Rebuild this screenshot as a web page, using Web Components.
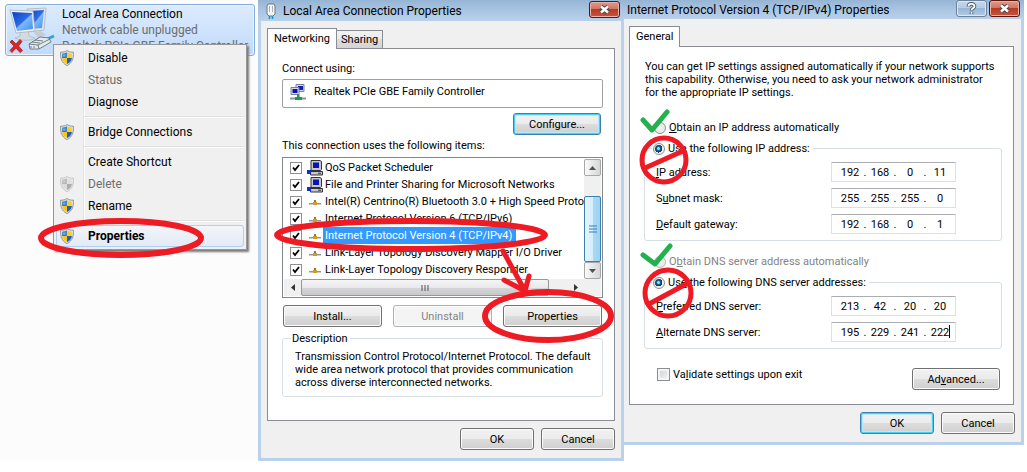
<!DOCTYPE html>
<html lang="en">
<head>
<meta charset="utf-8">
<title>Network connection settings</title>
<style>
  body { margin: 0; background: #fff; color: #000; }
  setup-guide { --ui: Roboto, "Open Sans", sans-serif; --classic: Roboto, "Liberation Sans", sans-serif; --tahoma: Roboto, "Noto Sans", sans-serif; }
</style>
</head>
<body>
<setup-guide>
  <connection-panel slot="menu"></connection-panel>
  <adapter-dialog slot="adapter"></adapter-dialog>
  <ip-dialog slot="ip"></ip-dialog>
</setup-guide>

<script>
const define = (name, html, setup) => {
  const tpl = document.createElement('template');
  tpl.innerHTML = html;
  customElements.define(name, class extends HTMLElement {
    constructor() {
      super();
      this.attachShadow({ mode: 'open' }).append(tpl.content.cloneNode(true));
    }
    connectedCallback() { if (setup) setup(this, this.shadowRoot); }
  });
};

define('setup-guide', `
<style>
  :host { display: grid; grid-template-columns: minmax(0, 258fr) minmax(0, 366fr) minmax(0, 400fr); align-items: start; padding-right: 3px; font: 12px/16px var(--ui); }
</style>
<slot name="menu"></slot><slot name="adapter"></slot><slot name="ip"></slot>`);

/* ---------- shared controls ---------- */

define('uac-shield', `
<style>
  :host { display: block; width: 14px; height: 16px; }
  :host([off]) { filter: grayscale(1) opacity(.45); }
  svg { display: block; }
</style>
<svg width="14" height="16" viewBox="0 0 14 16">
  <path d="M7 .5C5.400 1.800 3 2.300.6 2.200.4 7.500 1 12.600 7 15.600 13 12.600 13.600 7.500 13.400 2.200 11 2.300 8.600 1.800 7 .5z" fill="#e4e4e4" stroke="#8b8b8b" stroke-width=".9"/>
  <path d="M6.900 2.200C5.600 3.100 4 3.600 2.200 3.600L2.100 8H6.900z" fill="#2b7cd3"/>
  <path d="M7 2.200C8.400 3.100 10 3.600 11.800 3.600L11.900 8H7z" fill="#fdd017"/>
  <path d="M2.100 8H7V14C4 12.600 2.400 11 2.100 8z" fill="#fdc50f"/>
  <path d="M11.900 8H7V14C10 12.600 11.600 11 11.900 8z" fill="#1f5fb8"/>
  <path d="M3 4.500h2.500v2H3z" fill="#9fd0f5" opacity=".6"/>
</svg>`);

define('push-button', `
<style>
  :host { display: block; width: 74px; }
  button { display: block; box-sizing: border-box; width: 100%; height: 22px; padding: 0; font: inherit; color: #000;
    border: 1px solid #707070; border-radius: 3px; box-shadow: inset 0 0 0 1px #fcfcfc;
    background: linear-gradient(#f2f2f2, #ebebeb 50%, #dddddd 50%, #cfcfcf); }
  :host([primary]) button { border-color: #3c7fb1; box-shadow: inset 0 0 0 1px #48d0f5, inset 0 0 0 2px #b5eafb; }
  button:disabled { color: #838383; border-color: #adb2b5; background: #f4f4f4; }
</style>
<button type="button"><slot></slot></button>`, (el, root) => {
  root.querySelector('button').disabled = el.hasAttribute('disabled');
});

define('caption-button', `
<style>
  :host { display: block; width: 31px; }
  button { display: grid; place-items: center; box-sizing: border-box; width: 100%; height: 17px; padding: 0;
    border: 1px solid #5c1610; border-radius: 3px; box-shadow: inset 0 0 0 1px #e9b2a8;
    background: linear-gradient(#dd9a8c, #cf7464 48%, #b93a24 50%, #c4563f); }
  :host([kind=help]) button { border-color: #6d8199; box-shadow: inset 0 0 0 1px #dce9f6; background: linear-gradient(#c3d7ec, #b3cbe5 48%, #98b6d6 50%, #b2cce6); }
  svg { display: block; }
  .help, :host([kind=help]) .close { display: none; }
  :host([kind=help]) .help { display: block; }
</style>
<button type="button">
  <svg class="close" width="13" height="11" viewBox="0 0 13 11"><path d="M3 2.500l7 6M10 2.500l-7 6" stroke="#4a4a55" stroke-width="4.400"/><path d="M3 2.500l7 6M10 2.500l-7 6" stroke="#fff" stroke-width="2.400"/></svg>
  <svg class="help" width="11" height="13" viewBox="0 0 11 13"><g fill="none"><path d="M2.500 4.500C2.500 1 8.500 1 8.500 4.200 8.500 6.200 5.500 6.300 5.500 8.500M5.500 9.700v2.300" stroke="#4d5766" stroke-width="3.600"/><path d="M2.500 4.300C2.500 1.200 8.500 1.200 8.500 4.200 8.500 6.200 5.500 6.300 5.500 8.300M5.500 9.900v1.800" stroke="#fff" stroke-width="1.800"/></g></svg>
</button>`, (el, root) => {
  root.querySelector('button').setAttribute('aria-label', el.getAttribute('kind'));
});

define('window-frame', `
<style>
  :host { display: block; position: relative; border: solid #b9d1ea; border-width: 0 3px 3px; background: #f0f0f0; }
  header { display: flex; align-items: center; box-sizing: border-box; height: var(--bar, 21px); margin: 0 -3px; padding: 0 4px 0 var(--bar-pad, 3px);
    background: linear-gradient(#96b4d5, #a9c5e2 50%, #b9d1ea); }
  h1 { flex: 1; margin: 0; font: 12px/16px var(--ui); white-space: nowrap; }
  .tools { display: flex; gap: 2px; align-self: flex-start; padding-top: var(--tool-top, 0px); }
  .body { padding: 7px 6px 8px; }
  footer { display: flex; justify-content: flex-end; gap: 7px; padding-top: 7px; }
</style>
<header><slot name="icon"></slot><h1><slot name="title"></slot></h1><div class="tools"><slot name="tools"></slot></div></header>
<div class="body"><slot></slot><footer><slot name="footer"></slot></footer></div>`);

define('tab-sheet', `
<style>
  :host { display: block; }
  .tabs { display: flex; align-items: flex-end; }
  .sheet { box-sizing: border-box; border: 1px solid #898c95; background: #fff; padding: var(--sheet-pad); }
</style>
<div class="tabs" role="tablist"><slot name="tab"></slot></div>
<div class="sheet"><slot></slot></div>`);

define('tab-button', `
<style>
  :host { display: block; }
  button { display: block; box-sizing: border-box; height: 18px; padding: 0 4px; font: inherit; line-height: 17px; color: #000;
    border: 1px solid #898c95; border-bottom: 0; border-left: 0; background: linear-gradient(#f2f2f2, #ebebeb 50%, #dddddd 50%, #d4d4d4); }
  :host([active]) { position: relative; margin-bottom: -1px; }
  :host([active]) button { height: 21px; padding: 0 6px; line-height: 18px; border-left: 1px solid #898c95; background: #fff; }
</style>
<button type="button" role="tab"><slot></slot></button>`, (el, root) => {
  root.querySelector('button').setAttribute('aria-selected', el.hasAttribute('active'));
});

/* ---------- connection tile with its context menu ---------- */

define('menu-entry', `
<style>
  :host { display: block; }
  button { display: grid; grid-template-columns: 28px 1fr; align-items: center; box-sizing: border-box; width: 100%; height: 22px; padding: 0 0 0 3px;
    border: 1px solid transparent; border-radius: 3px; background: none; font: inherit; color: #000; text-align: left; }
  button:disabled { color: #6d6d6d; }
  :host([hot]) button { border-color: #aecff7; background: linear-gradient(#f2f5fa, #e3ebf5); font-weight: bold; }
  .label { grid-column: 2; white-space: nowrap; }
</style>
<button type="button" role="menuitem"><slot name="icon"></slot><span class="label"><slot></slot></span></button>`, (el, root) => {
  root.querySelector('button').disabled = el.hasAttribute('disabled');
});

define('connection-panel', `
<style>
  :host { display: block; position: relative; padding: 4px 3px 0 5px; background: #fcfcfc; min-height: 460px; box-sizing: border-box; }
  .tile { display: grid; grid-template-columns: 48px minmax(0, 1fr); gap: 6px; box-sizing: border-box; height: 52px; padding: 1px 4px 0 2px; overflow: hidden;
    border: 1px solid #84acdd; border-radius: 3px; box-shadow: inset 0 0 0 1px #eaf3fe; background: linear-gradient(#dcebfc, #c1dbfc); }
  .tile p { margin: 0; white-space: nowrap; overflow: hidden; text-overflow: ellipsis; color: #6d6d6d; }
  .tile p.name { color: #000; }
  .tile svg { display: block; }
  .menu { position: absolute; left: 53px; top: 44px; box-sizing: border-box; width: 194px; padding: 2px; border: 1px solid #979797;
    background: linear-gradient(90deg, #f0f0f0 29px, #e2e3e3 29px, #e2e3e3 30px, #fff 30px, #fff 31px, #f0f0f0 31px) ; box-shadow: 2px 2px 2px #777; }
  hr { margin: 3px 0 3px 28px; border: 0; border-top: 1px solid #e0e0e0; border-bottom: 1px solid #fff; }
  .ring { position: absolute; left: 38px; top: 217px; pointer-events: none; }
</style>
<div class="tile">
  <svg width="48" height="48" viewBox="0 0 48 48">
    <defs><linearGradient id="scr" x1="0" y1="0" x2="1" y2="1"><stop offset="0" stop-color="#0c3fc4"/><stop offset=".5" stop-color="#2b6ce6"/><stop offset=".55" stop-color="#7db8f8"/><stop offset="1" stop-color="#3f8cf0"/></linearGradient></defs>
    <path d="M26 26l7-1 5 4-8 3z" fill="#c5ccd3"/>
    <path d="M19 3l19-1-2 22-16 2z" fill="#dfe6ea" stroke="#a9b4bd" stroke-width=".8"/><path d="M21 5l15-1-2 18-12 1z" fill="url(#scr)"/>
    <path d="M12 26l8-1 1 5 6 2c-3 3-14 3-20 0l5-2z" fill="#d5dadd" stroke="#a8afb5" stroke-width=".6"/>
    <path d="M2 4l23 1 2 20-19 2z" fill="#eef1f2" stroke="#a9b4bd" stroke-width=".8"/><path d="M4 6l20 1 1 16-16 2z" fill="url(#scr)"/>
    <path d="M2 36l2-2 4 4 4-4.500 2 2-3.500 4.500 4 4.500-2.500 2-4-4.500-4 4.500-2-2 4-4.500z" fill="#e02525" stroke="#a60f12" stroke-width=".7"/>
    <path d="M37 34l9-4" fill="none" stroke="#3aa4cc" stroke-width="3"/>
    <path d="M21 38l11-7 9 1 2 4-12 7-9 0z" fill="#e5eaed" stroke="#68747e" stroke-width=".9"/><path d="M21 38l9 1 12-6M30 39l1 4M24 36l8 1M27 34l8 1M23 40v2M26 40v2" fill="none" stroke="#68747e" stroke-width=".9"/>
  </svg>
  <div><p class="name">Local Area Connection</p><p>Network cable unplugged</p><p>Realtek PCIe GBE Family Controller</p></div>
</div>
<div class="menu" role="menu">
  <menu-entry><uac-shield slot="icon"></uac-shield>Disable</menu-entry>
  <menu-entry disabled>Status</menu-entry>
  <menu-entry>Diagnose</menu-entry>
  <hr>
  <menu-entry><uac-shield slot="icon"></uac-shield>Bridge Connections</menu-entry>
  <hr>
  <menu-entry>Create Shortcut</menu-entry>
  <menu-entry disabled><uac-shield slot="icon" off></uac-shield>Delete</menu-entry>
  <menu-entry><uac-shield slot="icon"></uac-shield>Rename</menu-entry>
  <hr>
  <menu-entry hot><uac-shield slot="icon"></uac-shield>Properties</menu-entry>
</div>
<svg class="ring" width="168" height="42"><ellipse cx="83" cy="21" rx="80" ry="17" fill="none" stroke="#ed1c24" stroke-width="6"/></svg>`);

/* ---------- adapter properties ---------- */

define('protocol-row', `
<style>
  :host { display: block; }
  label { display: grid; grid-template-columns: 12px 16px 1fr; column-gap: 5px; align-items: center; height: 17px; white-space: nowrap; }
  input { appearance: none; box-sizing: border-box; width: 12px; height: 12px; margin: 0; border: 1px solid #8e8f8f; background: #fff; }
  input:checked { background: #fff url("data:image/svg+xml,%3Csvg xmlns='http://www.w3.org/2000/svg' viewBox='0 0 10 10'%3E%3Cpath d='M2 4.500l2 2.500 4-5' fill='none' stroke='%23000' stroke-width='1.800'/%3E%3C/svg%3E"); }
  svg { display: block; }
  .pc, :host([service]) .net { display: none; }
  :host([service]) .pc { display: block; }
  span { justify-self: start; margin-left: -5px; padding: 0 4px 0 2px; line-height: 17px; }
  :host([selected]) span { background: #3399ff; color: #fff; }
</style>
<label><input type="checkbox" checked>
  <svg class="net" width="16" height="16" viewBox="0 0 16 16"><path d="M2 9.500h12" stroke="#8f979c"/><path d="M2 10.500h12" stroke="#c9ced1"/><path d="M6 8h4v3H6z" fill="#d39a1d"/><path d="M7 6h2v2H7z" fill="#8f7a3a"/></svg>
  <svg class="pc" width="16" height="16" viewBox="0 0 16 16"><path d="M4 .5h9l1.500 1v8l-1 1H4z" fill="#c8c8c8" stroke="#333"/><path d="M6 2.500h6v5.500H6z" fill="#0a14b4"/><path d="M3.500 11.500h12v3.500h-12z" fill="#c8c8c8" stroke="#333"/><path d="M0 10h4v4H0z" fill="#1230c8"/><path d="M11 13.200h3" stroke="#333"/></svg>
  <span><slot></slot></span>
</label>`);

define('adapter-dialog', `
<style>
  :host { display: block; position: relative; font: 11px/13px var(--classic); }
  window-frame { --tool-top: 1px; --bar-pad: 7px; }
  .plug { display: block; width: 12px; margin-right: 6px; }
  tab-sheet { --sheet-pad: 13px 11px 23px 14px; }
  .card { display: flex; align-items: flex-start; gap: 8px; box-sizing: border-box; height: 29px; margin-top: 4px; padding: 4px 7px; border: 1px solid #a0a0a0; border-radius: 2px; }
  .card span { line-height: 15px; }
  .configure { display: flex; justify-content: flex-end; padding: 5px 2px 4px; }
  .configure push-button { width: 88px; }
  .list { display: grid; grid-template-columns: minmax(0, 1fr) 17px; grid-template-rows: 120px 17px; box-sizing: border-box; margin-top: 5px; padding: 1px; border: 1px solid #828790; }
  .rows { overflow: hidden; padding: 0 0 0 6px; }
  .vbar { display: grid; grid-template-rows: 17px 20px 1fr 17px; background: #f0f0f0; }
  .hbar { display: grid; grid-template-columns: 17px 248px 1fr 17px; background: #f0f0f0; }
  .corner { background: #f0f0f0; }
  .arrow, .thumb { display: grid; place-items: center; box-sizing: border-box; padding: 0; border: 1px solid #a8a8a8; border-radius: 2px; background: linear-gradient(90deg, #fafafa, #e8e8e8 50%, #d6d6d6); }
  .hbar .arrow { border-color: transparent; background: none; }
  .arrow.end { grid-row: 4; }
  .hbar .arrow.end { grid-area: 1 / 4; }
  .vbar .thumb { grid-row: 3; border-color: #3c7fb1; background: linear-gradient(90deg, #e3f4fc, #d6eefb 50%, #a9dbf5 50%, #9bd3f1); }
  .hbar .thumb { background: linear-gradient(#f5f5f5, #e9e9eb 50%, #d6d6d8 50%, #c8c8ca); border-color: #979797; }
  svg { display: block; }
  .actions { display: grid; grid-template-columns: repeat(3, 1fr); gap: 11px; margin-top: 7px; padding: 0 1px; }
  .actions push-button { width: auto; }
  fieldset { min-width: 0; margin: 5px 0 0; padding: 5px 12px 7px; border: 1px solid #d5dfe5; border-radius: 3px; }
  legend { margin-left: -4px; padding: 0 2px 0 1px; }
  fieldset p { margin: 0; white-space: nowrap; }
  .mark { position: absolute; left: 0; top: 0; pointer-events: none; }
</style>
<window-frame>
  <svg slot="icon" class="plug" width="12" height="18" viewBox="0 0 12 18"><path d="M3 2h6l1 2v8l-2 2H4l-2-2V4z" fill="#f3f5f6" stroke="#70777d"/><path d="M4.500 4v6M7.500 4v6" stroke="#a8b0b5"/><path d="M4.500 14v3M7.500 14v3" stroke="#1b93cc" stroke-width="1.500"/></svg>
  <span slot="title">Local Area Connection Properties</span>
  <caption-button slot="tools" kind="close"></caption-button>
  <tab-sheet>
    <tab-button slot="tab" active>Networking</tab-button><tab-button slot="tab">Sharing</tab-button>
    <div>Connect using:</div>
    <div class="card">
      <svg width="16" height="17" viewBox="0 0 16 17"><path d="M6 .5h8v7H6z" fill="#d8dce4" stroke="#7a8090"/><path d="M8 2h5v4H8z" fill="#1020c0"/><path d="M1 3.500h8v7H1z" fill="#d8dce4" stroke="#7a8090"/><path d="M2.500 5h5v4h-5z" fill="#0a14b4"/><path d="M7 10.500h2.500V13H12v3H5v-3h2z" fill="#1c9a4a"/><path d="M0 14.500h5M12 14.500h4" stroke="#8d9494" stroke-width="2"/></svg>
      <span>Realtek PCIe GBE Family Controller</span>
    </div>
    <div class="configure"><push-button primary>Configure...</push-button></div>
    <div>This connection uses the following items:</div>
    <div class="list">
      <div class="rows">
        <protocol-row service>QoS Packet Scheduler</protocol-row>
        <protocol-row service>File and Printer Sharing for Microsoft Networks</protocol-row>
        <protocol-row>Intel(R) Centrino(R) Bluetooth 3.0 + High Speed Protocol</protocol-row>
        <protocol-row>Internet Protocol Version 6 (TCP/IPv6)</protocol-row>
        <protocol-row selected>Internet Protocol Version 4 (TCP/IPv4)</protocol-row>
        <protocol-row>Link-Layer Topology Discovery Mapper I/O Driver</protocol-row>
        <protocol-row>Link-Layer Topology Discovery Responder</protocol-row>
      </div>
      <div class="vbar">
        <button type="button" class="arrow" aria-label="Scroll up"><svg width="7" height="4"><path d="M0 4l3.500-4L7 4z" fill="#505050"/></svg></button>
        <div class="thumb"><svg width="8" height="8"><path d="M0 1h8M0 4h8M0 7h8" stroke="#3c7fb1"/></svg></div>
        <button type="button" class="arrow end" aria-label="Scroll down"><svg width="7" height="4"><path d="M0 0l3.500 4L7 0z" fill="#505050"/></svg></button>
      </div>
      <div class="hbar">
        <button type="button" class="arrow" aria-label="Scroll left"><svg width="4" height="7"><path d="M4 0L0 3.500 4 7z" fill="#333"/></svg></button>
        <div class="thumb"><svg width="8" height="6"><path d="M1 0v6M4 0v6M7 0v6" stroke="#555"/></svg></div>
        <button type="button" class="arrow end" aria-label="Scroll right"><svg width="4" height="7"><path d="M0 0l4 3.500L0 7z" fill="#333"/></svg></button>
      </div>
      <div class="corner"></div>
    </div>
    <div class="actions"><push-button>Install...</push-button><push-button disabled>Uninstall</push-button><push-button>Properties</push-button></div>
    <fieldset><legend>Description</legend>
      <p>Transmission Control Protocol/Internet Protocol. The default<br>wide area network protocol that provides communication<br>across diverse interconnected networks.</p>
    </fieldset>
  </tab-sheet>
  <push-button slot="footer">OK</push-button><push-button slot="footer">Cancel</push-button>
</window-frame>
<svg class="mark" width="366" height="350"><g fill="none" stroke="#ed1c24" stroke-width="6">
  <ellipse cx="153" cy="235" rx="134" ry="14"/><ellipse cx="290" cy="316" rx="63" ry="24"/>
  <path d="M245 251l22 40M246 280l21 11 4-15" stroke-width="5" stroke-linecap="round" stroke-linejoin="round"/></g></svg>`);

/* ---------- TCP/IPv4 properties ---------- */

define('radio-choice', `
<style>
  :host { display: block; }
  label { display: flex; align-items: center; gap: 3px; white-space: nowrap; }
  input { appearance: none; box-sizing: border-box; width: 12px; height: 12px; margin: 0; border: 1px solid #8e8f8f; border-radius: 50%; box-shadow: inset 0 0 0 1px #f4f4f4; background: radial-gradient(circle, #f6f6f6, #d8dbde); }
  input:checked { background: radial-gradient(circle at 45% 45%, #8fdcf8 0 1px, #1a5f94 2px, #0c2f4f 4px, #e6ebef 4px); }
  :host([disabled]) { color: #838383; }
  :host([disabled]) input { border-color: #b4b4b4; }
</style>
<label><input type="radio"><span><slot></slot></span></label>`, (el, root) => {
  const input = root.querySelector('input');
  input.checked = el.hasAttribute('checked');
  input.disabled = el.hasAttribute('disabled');
});

define('address-field', `
<style>
  :host { display: grid; grid-template-columns: 1fr 125px; align-items: center; height: 20px; }
  .box { display: flex; align-items: center; position: relative; box-sizing: border-box; height: 20px; padding-left: 5px; border: 1px solid #dbdfe6; border-top-color: #abadb3; border-radius: 1px; background: #fff; }
  input { box-sizing: border-box; width: 26px; height: 16px; margin: 0; padding: 0; border: 0; outline: 0; background: none; font: inherit; color: #000; text-align: center; }
  i { width: 4px; font-style: normal; text-align: center; }
  .caret { display: none; position: absolute; left: 117px; top: 2px; width: 1px; height: 13px; background: #000; }
  :host([editing]) .caret { display: block; }
</style>
<label for="a"><slot></slot></label>
<div class="box"><input id="a"><i>.</i><input><i>.</i><input><i>.</i><input><span class="caret"></span></div>`, (el, root) => {
  const parts = el.getAttribute('value').split('.');
  root.querySelectorAll('input').forEach((input, i) => {
    input.value = parts[i];
    if (i) input.setAttribute('aria-label', 'Part ' + (i + 1));
  });
});

define('ip-dialog', `
<style>
  :host { display: block; position: relative; font: 11px/13px var(--tahoma); }
  window-frame { --bar: 19px; --bar-pad: 6px; border-left-width: 0; }
  tab-sheet { --sheet-pad: 13px 11px 14px 15px; margin: 0 1px 0 -1px; }
  p { margin: 0; white-space: nowrap; }
  .auto { margin: 22px 0 0 9px; }
  .group { display: grid; gap: 6px; min-width: 0; margin: 8px 0 0 -1px; padding: 7px 45px 6px 11px; border: 1px solid #d5dfe5; border-radius: 3px; }
  .auto.dns { margin-top: 14px; }
  legend { margin-left: -4px; padding: 0 3px 0 1px; }
  .options { display: flex; justify-content: space-between; align-items: flex-start; margin-top: 19px; padding: 0 2px 0 12px; }
  .options label { display: flex; align-items: center; gap: 3px; }
  .options input { appearance: none; box-sizing: border-box; width: 13px; height: 13px; margin: 0; border: 1px solid #8e8f8f; box-shadow: inset 0 0 0 2px #f4f4f4; background: linear-gradient(135deg, #cbcfd5, #f6f6f6); }
  .options push-button { width: 88px; }
  .mark { position: absolute; left: 0; top: 0; pointer-events: none; }
</style>
<window-frame>
  <span slot="title">Internet Protocol Version 4 (TCP/IPv4) Properties</span>
  <caption-button slot="tools" kind="help"></caption-button><caption-button slot="tools" kind="close"></caption-button>
  <tab-sheet>
    <tab-button slot="tab" active>General</tab-button>
    <p>You can get IP settings assigned automatically if your network supports<br>this capability. Otherwise, you need to ask your network administrator<br>for the appropriate IP settings.</p>
    <radio-choice class="auto"><u>O</u>btain an IP address automatically</radio-choice>
    <fieldset class="group"><legend><radio-choice checked>U<u>s</u>e the following IP address:</radio-choice></legend>
      <address-field value="192.168.0.11"><u>I</u>P address:</address-field>
      <address-field value="255.255.255.0">S<u>u</u>bnet mask:</address-field>
      <address-field value="192.168.0.1"><u>D</u>efault gateway:</address-field>
    </fieldset>
    <radio-choice class="auto dns" disabled>O<u>b</u>tain DNS server address automatically</radio-choice>
    <fieldset class="group"><legend><radio-choice checked>Us<u>e</u> the following DNS server addresses:</radio-choice></legend>
      <address-field value="213.42.20.20"><u>P</u>referred DNS server:</address-field>
      <address-field value="195.229.241.222" editing><u>A</u>lternate DNS server:</address-field>
    </fieldset>
    <div class="options"><label><input type="checkbox"><span>Va<u>l</u>idate settings upon exit</span></label><push-button>Ad<u>v</u>anced...</push-button></div>
  </tab-sheet>
  <push-button slot="footer" primary>OK</push-button><push-button slot="footer">Cancel</push-button>
</window-frame>
<svg class="mark" width="80" height="330"><g fill="none" stroke-width="5">
  <path d="M19 120l9 10 15-18M19 255l12 9 15-18" stroke="#22b14c" stroke-linecap="round" stroke-linejoin="round"/>
  <g stroke="#ed1c24"><circle cx="40" cy="160" r="22"/><path d="M21 168l38-17"/><circle cx="44" cy="293" r="23"/><path d="M25 304l39-21"/></g></g></svg>`);
</script>
</body>
</html>
